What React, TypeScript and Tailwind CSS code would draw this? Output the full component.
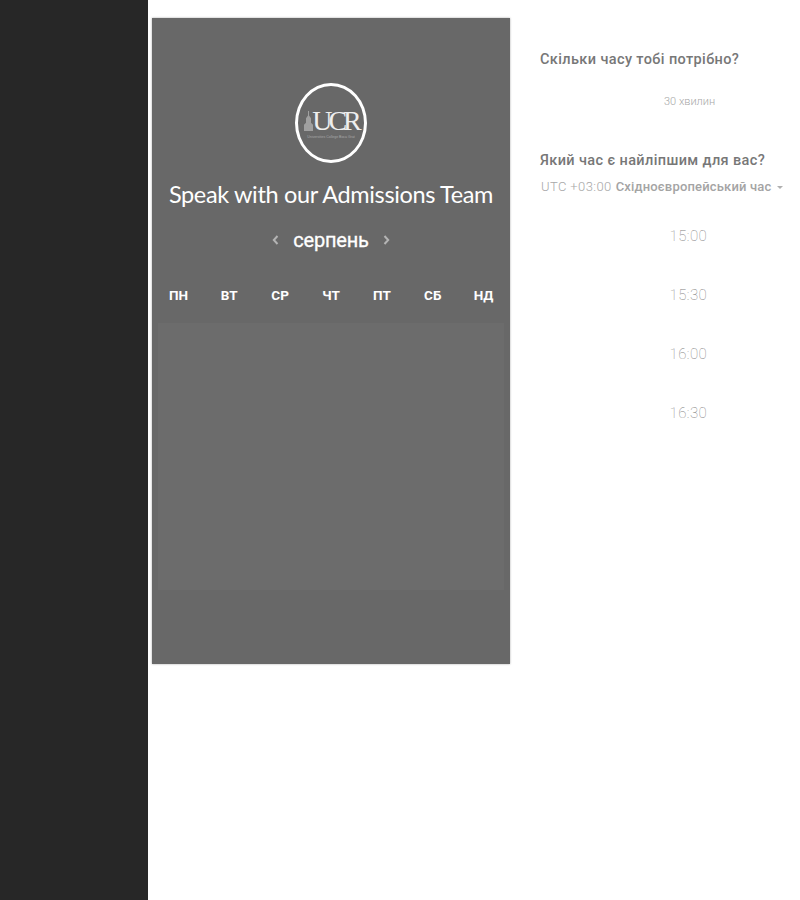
const weekDays = ["ПН", "ВТ", "СР", "ЧТ", "ПТ", "СБ", "НД"];
const slots = ["15:00", "15:30", "16:00", "16:30"];

function Chevron({ flip }: { flip?: boolean }) {
  return (
    <svg width="7" height="10" viewBox="0 0 7 10" className={flip ? "rotate-180" : ""}>
      <path d="M5.5 1 1.8 5l3.7 4" fill="none" stroke="#b4b4b4" strokeWidth="2" />
    </svg>
  );
}

function Logo() {
  return (
    <div className="flex h-[80px] w-[72px] flex-col items-center justify-center rounded-[50%] border-[3px] border-white">
      <div className="flex items-end">
        <svg width="9" height="20" viewBox="0 0 9 22" preserveAspectRatio="none" className="mb-[3px] mr-[-1px]">
          <path d="M4 0h1v5l2 3v5l2 2v7H0v-7l2-2V8l2-3z" fill="#a0a0a0" />
        </svg>
        <span className="font-['Liberation_Serif',serif] text-[28px] leading-[26px] tracking-[-4px] text-[#eeeeee]">UCR</span>
      </div>
      <span className="mt-[1px] font-['Liberation_Sans',sans-serif] text-[3.5px] leading-[4px] text-[#a8a8a8]">Universities College Boca Grat</span>
    </div>
  );
}

function CalendarCard() {
  return (
    <section className="mt-[18px] flex h-[646px] w-[358px] flex-col bg-[#686868] shadow-[0_0_2px_rgba(0,0,0,0.35)]">
      <div className="flex justify-center pt-[65px]">
        <Logo />
      </div>
      <h1 className="mt-[14px] text-center font-['Lato',sans-serif] text-[23.5px] font-normal leading-[34px] tracking-[-0.35px] whitespace-nowrap text-white">
        Speak with our Admissions Team
      </h1>
      <div className="mt-[15px] flex h-[28px] items-center justify-center gap-[14px] font-['Roboto',sans-serif]">
        <Chevron />
        <span className="text-[20px] font-normal leading-[28px] tracking-[-0.2px] text-white [-webkit-text-stroke:0.3px_white]">серпень</span>
        <Chevron flip />
      </div>
      <div className="mt-[31px] grid grid-cols-7 px-[1px] font-['Roboto',sans-serif] text-[13.5px] font-bold leading-[20px] text-white">
        {weekDays.map((day) => (
          <span key={day} className="text-center">{day}</span>
        ))}
      </div>
      <div className="mx-[6px] mt-[18px] h-[267px] bg-[#6c6c6c]" />
      <div className="flex-1" />
    </section>
  );
}

function SchedulePanel() {
  return (
    <section className="ml-[30px] w-[260px] pt-[50px] font-['Roboto',sans-serif]">
      <h2 className="text-[14.5px] font-medium leading-[20px] tracking-[0.38px] text-[#777777]">Скільки часу тобі потрібно?</h2>
      <p className="mt-[22px] w-[300px] pl-[124px] text-[11px] font-light leading-[20px] text-[#a8a8a8]">30 хвилин</p>
      <h2 className="mt-[39px] text-[14.5px] font-medium leading-[20px] tracking-[0.38px] text-[#777777]">Який час є найліпшим для вас?</h2>
      <div className="mt-[6px] flex items-center whitespace-nowrap text-[13px] leading-[20px] text-[#a8a8a8]">
        <span className="ml-[1px] font-light tracking-[0.4px]">UTC +03:00</span>
        <span className="ml-[4px] font-medium tracking-[0.17px] text-[#a4a4a4]">Східноєвропейський час</span>
        <span className="ml-[6px] h-0 w-0 border-x-[3px] border-t-[3px] border-x-transparent border-t-[#b0b0b0]" />
      </div>
      <div className="mt-[29px] flex flex-col">
        {slots.map((slot) => (
          <div key={slot} className="h-[59px] w-[296px] pl-[129.5px] text-[15px] font-thin leading-[20px] tracking-[0.45px] text-[#808080]">
            {slot}
          </div>
        ))}
      </div>
    </section>
  );
}

export default function App() {
  return (
    <div className="flex h-[900px] w-[800px] overflow-hidden bg-white">
      <aside className="h-full w-[148px] shrink-0 bg-[#272727]" />
      <main className="ml-[4px] flex items-start">
        <CalendarCard />
        <SchedulePanel />
      </main>
    </div>
  );
}
